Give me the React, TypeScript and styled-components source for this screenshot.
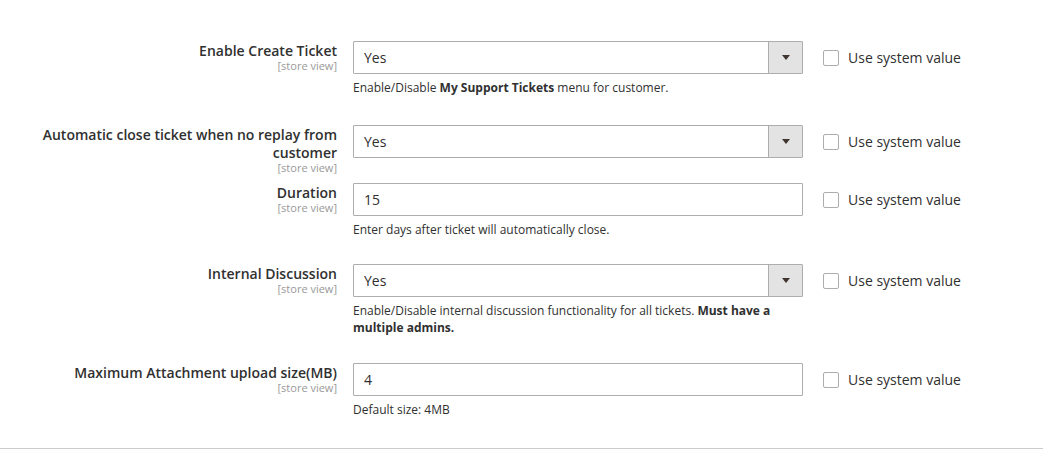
import React from 'react';
import styled, { createGlobalStyle } from 'styled-components';

const GlobalStyle = createGlobalStyle`
    html, body {
        margin: 0;
        padding: 0;
        background: #fff;
    }
    body {
        font-family: 'Open Sans', 'Liberation Sans', sans-serif;
        color: #303030;
    }
`;

const Fieldset = styled.div`
    padding: 41px 0 30px;
    border-bottom: 1px solid #cccccc;
`;

const Row = styled.div<{ $space?: number }>`
    display: grid;
    grid-template-columns: 322px 450px auto;
    column-gap: 16px;
    align-items: start;
    padding-left: 15px;
    margin-top: ${(p) => p.$space ?? 0}px;
`;

const LabelCell = styled.div`
    padding-top: 1px;
    text-align: right;
`;

const LabelText = styled.div`
    font-size: 14px;
    font-weight: 600;
    line-height: 18px;
    color: #303030;
`;

const Scope = styled.div`
    font-size: 11px;
    line-height: 12px;
    color: #999999;
`;

const ValueCell = styled.div`
    display: flex;
    flex-direction: column;
`;

const TextInput = styled.input`
    box-sizing: border-box;
    width: 100%;
    height: 33px;
    margin: 0;
    padding: 0 10px;
    border: 1px solid #adadad;
    border-radius: 1px;
    font-family: inherit;
    font-size: 14px;
    color: #303030;
    background: #fff;
    outline: none;
`;

const Select = styled.div`
    box-sizing: border-box;
    display: flex;
    height: 33px;
    border: 1px solid #adadad;
    border-radius: 1px;
    background: #fff;
`;

const SelectValue = styled.span`
    flex: 1;
    padding-left: 10px;
    font-size: 14px;
    line-height: 31px;
    color: #303030;
`;

const ArrowBox = styled.span`
    width: 33px;
    display: flex;
    align-items: center;
    justify-content: center;
    border-left: 1px solid #adadad;
    background: #e3e3e3;
`;

const Note = styled.div`
    margin-top: 5px;
    font-size: 12px;
    line-height: 17px;
    color: #303030;
`;

const Strong = styled.span`
    font-weight: 700;
`;

const DefaultCell = styled.label`
    display: flex;
    align-items: center;
    gap: 9px;
    height: 33px;
    margin-left: 4px;
    font-size: 14px;
    color: #303030;
`;

const Checkbox = styled.span`
    box-sizing: border-box;
    width: 16px;
    height: 16px;
    border: 1px solid #adadad;
    border-radius: 2px;
    background: #fff;
`;

const Arrow = () => (
    <svg width='8' height='5' viewBox='0 0 8 5'>
        <path d='M0 0h8L4 5z' fill='#41362f' />
    </svg>
);

type Field = {
    label: string;
    kind: 'select' | 'text';
    value: string;
    note?: React.ReactNode;
    space: number;
};

const fields: Field[] = [
    {
        label: 'Enable Create Ticket',
        kind: 'select',
        value: 'Yes',
        note: <>Enable/Disable <Strong>My Support Tickets</Strong> menu for customer.</>,
        space: 0,
    },
    {
        label: 'Automatic close ticket when no replay from customer',
        kind: 'select',
        value: 'Yes',
        space: 29,
    },
    {
        label: 'Duration',
        kind: 'text',
        value: '15',
        note: 'Enter days after ticket will automatically close.',
        space: 9,
    },
    {
        label: 'Internal Discussion',
        kind: 'select',
        value: 'Yes',
        note: (
            <>
                Enable/Disable internal discussion functionality for all tickets. <Strong>Must have a</Strong>{' '}
                <Strong>multiple admins.</Strong>
            </>
        ),
        space: 26,
    },
    {
        label: 'Maximum Attachment upload size(MB)',
        kind: 'text',
        value: '4',
        note: 'Default size: 4MB',
        space: 27,
    },
];

const App: React.FC = () => {
    return (
        <>
            <GlobalStyle />
            <Fieldset>
                {fields.map((f) => (
                    <Row key={f.label} $space={f.space}>
                        <LabelCell>
                            <LabelText>{f.label}</LabelText>
                            <Scope>[store view]</Scope>
                        </LabelCell>
                        <ValueCell>
                            {f.kind === 'select' ? (
                                <Select>
                                    <SelectValue>{f.value}</SelectValue>
                                    <ArrowBox>
                                        <Arrow />
                                    </ArrowBox>
                                </Select>
                            ) : (
                                <TextInput defaultValue={f.value} readOnly />
                            )}
                            {f.note && <Note>{f.note}</Note>}
                        </ValueCell>
                        <DefaultCell>
                            <Checkbox />
                            Use system value
                        </DefaultCell>
                    </Row>
                ))}
            </Fieldset>
        </>
    );
};

export default App;
